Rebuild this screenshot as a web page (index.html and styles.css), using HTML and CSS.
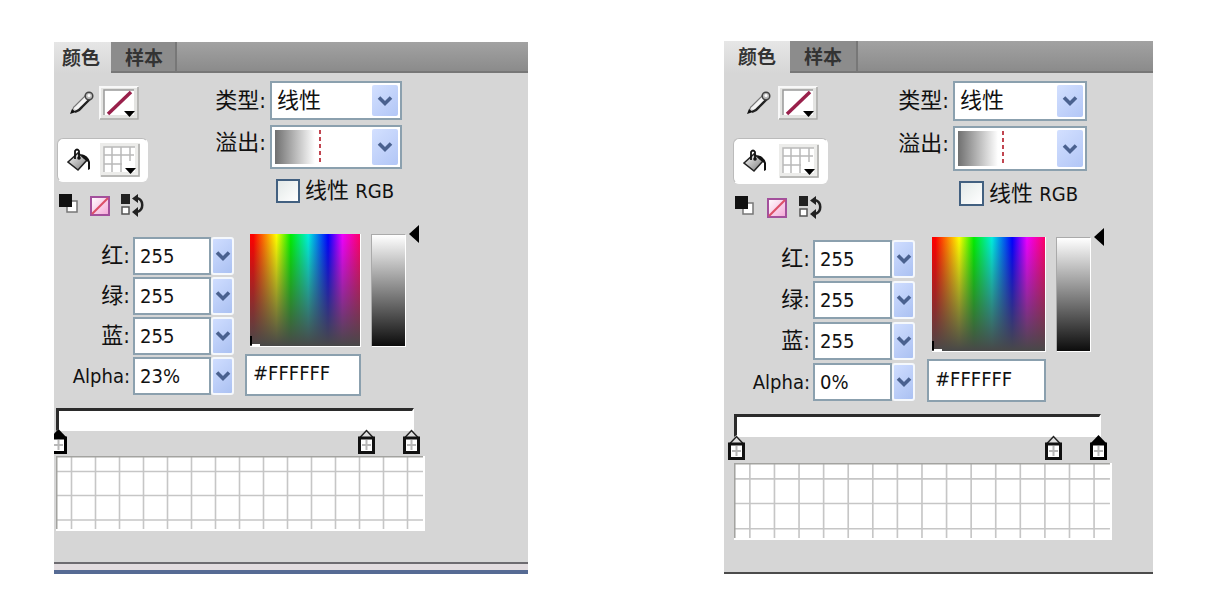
FILE: index.html
```html
<!DOCTYPE html>
<html lang="zh-CN">
<head>
<meta charset="utf-8">
<title>颜色</title>
<link rel="stylesheet" href="styles.css">
</head>
<body>
<svg class="defs" aria-hidden="true">
  <defs>
    <linearGradient id="steel" x1="0" y1="0" x2="1" y2="1"><stop offset="0" stop-color="#fff"/><stop offset="1" stop-color="#777"/></linearGradient>
    <linearGradient id="pink" x1="0" y1="0" x2="1" y2="1"><stop offset="0" stop-color="#fff"/><stop offset="1" stop-color="#f3a6d6"/></linearGradient>
  </defs>
  <symbol id="pencil" viewBox="0 0 24 24">
    <path d="M3 17 14 5 19 9 8 20Z" fill="#f4f4f4"/>
    <path d="M2 21Q3 16 5 15L16 4" fill="none" stroke="#777" stroke-width="1.200"/>
    <path d="M5 21Q10 19 12 16L20 8" fill="none" stroke="#222" stroke-width="2.400"/>
    <path d="M0 23 2 18 6 21Z" fill="#111"/>
    <circle cx="19" cy="5" r="3.800" fill="#bbb" stroke="#444" stroke-width="1.500"/>
    <circle cx="19" cy="4.500" r="1.500" fill="#fff"/>
  </symbol>
  <symbol id="bucket" viewBox="0 0 24 24">
    <path d="M1 14 11 5 20 12 11 22Z" fill="url(#steel)" stroke="#222" stroke-width="1.600"/>
    <path d="M8 11V3q2-3 4 0v7" fill="none" stroke="#111" stroke-width="1.800"/>
    <circle cx="12" cy="10" r="1.800" fill="#111"/>
    <path d="M14 6q7 1 9 8v7l-2 1v-8l-5-4Z" fill="#111"/>
  </symbol>
  <symbol id="nostroke" viewBox="0 0 40 34">
    <path d="M0 0H40V34H0Z" fill="#e4e4e2"/>
    <path d="M1 33V1H39" fill="none" stroke="#f8f8f8" stroke-width="2"/>
    <path d="M1 33H39V1" fill="none" stroke="#a8a8a6" stroke-width="1.500"/>
    <path d="M5 4H35V29H5Z" fill="#fff"/><path d="M5 29V4H35" fill="none" stroke="#999" stroke-width="1.500"/>
    <path d="M9 28 32 6" stroke="#99204b" stroke-width="3.500"/>
    <path d="M25 25H36L30.500 31Z" fill="#000"/>
  </symbol>
  <symbol id="gridfill" viewBox="0 0 40 34">
    <path d="M0 0H40V34H0Z" fill="#ececea"/>
    <path d="M1 33H39V1" fill="none" stroke="#a8a8a6" stroke-width="1.500"/>
    <path d="M4 4H35V29H4Z" fill="#fff"/><path d="M4 29V4H35M12 4V29M21 4V29M30 4V18M4 12H34M4 21H22" fill="none" stroke="#b9b9b9" stroke-width="1.500"/>
    <path d="M25 25H36L30.500 31Z" fill="#000"/>
  </symbol>
  <symbol id="bw" viewBox="0 0 20 24">
    <path d="M8 7H18V18H8Z" fill="#fff" stroke="#777" stroke-width="1.500"/>
    <path d="M0 0H13V13H0Z" fill="#111"/>
  </symbol>
  <symbol id="none" viewBox="0 0 22 24">
    <path d="M2 3H20V21H2Z" fill="url(#pink)" stroke="#a3509c" stroke-width="2"/>
    <path d="M3 20 19 4" stroke="#dc5068" stroke-width="2.200"/>
  </symbol>
  <symbol id="swap" viewBox="0 0 24 24">
    <path d="M0 0H9V10H0Z" fill="#222"/><path d="M1 13H8V20H1Z" fill="#fff" stroke="#555" stroke-width="1.500"/>
    <path d="M16 4C23 6 23 16 16 18" fill="none" stroke="#222" stroke-width="2.500"/>
    <path d="M11 4.500 17 0V9ZM11 18 17 13V23Z" fill="#222"/>
  </symbol>
  <symbol id="chev" viewBox="0 0 16 12"><path d="M2 2.500 8 8.500 14 2.500" fill="none" stroke="#4a618f" stroke-width="3.600"/></symbol>
  <symbol id="stop" viewBox="0 0 17 25">
    <path d="M1.500 9 8.500 1.500 15.500 9Z" fill="#ddd" stroke="#222" stroke-width="1.500"/>
    <path d="M1.500 9H15.500V23.500H1.500Z" fill="#fff" stroke="#111" stroke-width="3"/>
    <path d="M8.500 11V21M4 16H13" stroke="#b8b8b8" stroke-width="2"/>
  </symbol>
  <symbol id="stop-on" viewBox="0 0 17 25">
    <path d="M0 9 8.500 0 17 9Z" fill="#000"/>
    <path d="M1.500 9H15.500V23.500H1.500Z" fill="#fff" stroke="#000" stroke-width="3"/>
    <path d="M8.500 11V21M4 16H13" stroke="#b8b8b8" stroke-width="2"/>
  </symbol>
  <symbol id="lattice" viewBox="0 0 369 75" preserveAspectRatio="none">
    <path d="M0 0H369V75H0Z" fill="#fff"/>
    <path d="M15.500 0V73M39.500 0V73M63.500 0V73M87.500 0V73M111.500 0V73M135.500 0V73M159.500 0V73M183.500 0V73M207.500 0V73M231.500 0V73M255.500 0V73M279.500 0V73M303.500 0V73M327.500 0V73M351.500 0V73M0 15.500H367M0 39.500H367M0 64H367" fill="none" stroke="#c6c6c6" stroke-width="1.600"/>
    <path d="M.75 73V.75H367" fill="none" stroke="#a3a3a0" stroke-width="1.500"/>
  </symbol>
</svg>

<section class="panel panel-a">
  <div class="tabs" role="tablist">
    <button class="tab active" role="tab" aria-selected="true">颜色</button>
    <button class="tab" role="tab" aria-selected="false">样本</button>
  </div>
  <div class="top">
    <div class="tools">
      <div class="stroke-row">
        <svg class="tool"><use href="#pencil"/></svg>
        <button class="swatch" aria-label="笔触颜色"><svg><use href="#nostroke"/></svg></button>
      </div>
      <div class="fill-row">
        <svg class="tool"><use href="#bucket"/></svg>
        <button class="swatch" aria-label="填充颜色"><svg><use href="#gridfill"/></svg></button>
      </div>
      <div class="mini-row">
        <button class="mini mini-bw" aria-label="黑白"><svg><use href="#bw"/></svg></button>
        <button class="mini mini-none" aria-label="无颜色"><svg><use href="#none"/></svg></button>
        <button class="mini mini-swap" aria-label="交换颜色"><svg><use href="#swap"/></svg></button>
      </div>
    </div>
    <div class="settings">
      <label class="cap" for="a-type">类型:</label>
      <div class="combo">
        <select id="a-type"><option>线性</option></select>
        <span class="arrow"><svg><use href="#chev"/></svg></span>
      </div>
      <label class="cap cap-top" for="a-flow">溢出:</label>
      <div class="combo combo-tall">
        <select id="a-flow"><option></option></select>
        <span class="preview"></span>
        <span class="arrow"><svg><use href="#chev"/></svg></span>
      </div>
      <div class="check">
        <input type="checkbox" id="a-rgb"><label for="a-rgb">线性 <span class="latin">RGB</span></label>
      </div>
    </div>
  </div>
  <div class="middle">
    <div class="fields">
      <label for="a-r">红:</label><input id="a-r" value="255"><button class="step" aria-label="红"><svg><use href="#chev"/></svg></button>
      <label for="a-g">绿:</label><input id="a-g" value="255"><button class="step" aria-label="绿"><svg><use href="#chev"/></svg></button>
      <label for="a-b">蓝:</label><input id="a-b" value="255"><button class="step" aria-label="蓝"><svg><use href="#chev"/></svg></button>
      <label for="a-a" class="latin">Alpha:</label><input id="a-a" value="23%"><button class="step" aria-label="Alpha"><svg><use href="#chev"/></svg></button>
    </div>
    <div class="picker">
      <div class="maps">
        <div class="spectrum"></div>
        <div class="luma"></div>
        <svg class="pointer" viewBox="0 0 10 18"><path d="M0 9 10 0V18Z"/></svg>
      </div>
      <input class="hex" aria-label="十六进制" value="#FFFFFF">
    </div>
  </div>
  <div class="gradient">
    <div class="ramp">
      <svg class="stop at-start"><use href="#stop-on"/></svg>
      <svg class="stop at-mid"><use href="#stop"/></svg>
      <svg class="stop at-end"><use href="#stop"/></svg>
    </div>
    <svg class="lattice"><use href="#lattice"/></svg>
  </div>
  <div class="foot"></div>
</section>

<section class="panel panel-b">
  <div class="tabs" role="tablist">
    <button class="tab active" role="tab" aria-selected="true">颜色</button>
    <button class="tab" role="tab" aria-selected="false">样本</button>
  </div>
  <div class="top">
    <div class="tools">
      <div class="stroke-row">
        <svg class="tool"><use href="#pencil"/></svg>
        <button class="swatch" aria-label="笔触颜色"><svg><use href="#nostroke"/></svg></button>
      </div>
      <div class="fill-row">
        <svg class="tool"><use href="#bucket"/></svg>
        <button class="swatch" aria-label="填充颜色"><svg><use href="#gridfill"/></svg></button>
      </div>
      <div class="mini-row">
        <button class="mini mini-bw" aria-label="黑白"><svg><use href="#bw"/></svg></button>
        <button class="mini mini-none" aria-label="无颜色"><svg><use href="#none"/></svg></button>
        <button class="mini mini-swap" aria-label="交换颜色"><svg><use href="#swap"/></svg></button>
      </div>
    </div>
    <div class="settings">
      <label class="cap" for="b-type">类型:</label>
      <div class="combo">
        <select id="b-type"><option>线性</option></select>
        <span class="arrow"><svg><use href="#chev"/></svg></span>
      </div>
      <label class="cap cap-top" for="b-flow">溢出:</label>
      <div class="combo combo-tall">
        <select id="b-flow"><option></option></select>
        <span class="preview"></span>
        <span class="arrow"><svg><use href="#chev"/></svg></span>
      </div>
      <div class="check">
        <input type="checkbox" id="b-rgb"><label for="b-rgb">线性 <span class="latin">RGB</span></label>
      </div>
    </div>
  </div>
  <div class="middle">
    <div class="fields">
      <label for="b-r">红:</label><input id="b-r" value="255"><button class="step" aria-label="红"><svg><use href="#chev"/></svg></button>
      <label for="b-g">绿:</label><input id="b-g" value="255"><button class="step" aria-label="绿"><svg><use href="#chev"/></svg></button>
      <label for="b-b">蓝:</label><input id="b-b" value="255"><button class="step" aria-label="蓝"><svg><use href="#chev"/></svg></button>
      <label for="b-a" class="latin">Alpha:</label><input id="b-a" value="0%"><button class="step" aria-label="Alpha"><svg><use href="#chev"/></svg></button>
    </div>
    <div class="picker">
      <div class="maps">
        <div class="spectrum"></div>
        <div class="luma"></div>
        <svg class="pointer" viewBox="0 0 10 18"><path d="M0 9 10 0V18Z"/></svg>
      </div>
      <input class="hex" aria-label="十六进制" value="#FFFFFF">
    </div>
  </div>
  <div class="gradient">
    <div class="ramp">
      <svg class="stop at-start"><use href="#stop"/></svg>
      <svg class="stop at-mid"><use href="#stop"/></svg>
      <svg class="stop at-end"><use href="#stop-on"/></svg>
    </div>
    <svg class="lattice"><use href="#lattice"/></svg>
  </div>
  <div class="foot"></div>
</section>
</body>
</html>
```
FILE: styles.css
```css
* { box-sizing: border-box; }

body {
  margin: 0;
  padding: 41px 64px 0 54px;
  display: flex;
  align-items: flex-end;
  gap: 196px;
  background: #fff;
  color: #111;
  font-family: "DejaVu Sans Condensed", "Noto Sans", "Noto Sans CJK SC", sans-serif;
  font-size: 20px;
}

button, input, select { font: inherit; color: inherit; margin: 0; }
button { padding: 0; border: 0; background: none; }
svg { display: block; }
.defs { position: absolute; width: 0; height: 0; }

.panel {
  display: flex;
  flex-direction: column;
  min-width: 0;
  overflow: hidden;
  background: #d6d6d6;
}

.panel-a {
  flex: 474 1 0;
  --tabs-h: 31px;
  --tab-pad: 8px;
  --tab1: 57px;
  --tab2: 66px;
  --left: 3px;
  --tool-pad: 13px;
  --tool-gap: 5px;
  --box-gap: 9px;
  --box-w: 91px;
  --box-h: 44px;
  --mini-gap: 10px;
  --settings-x: 156px;
  --control: 132px;
  --combo-h: 39px;
  --combo-tall: 44px;
  --check: 24px;
  --top-h: 161px;
  --field-end: 76px;
  --field-w: 81px;
  --field-gap: 2px;
  --picker-gap: 11px;
  --map-w: 111px;
  --map-h: 113px;
  --hex-w: 116px;
  --hex-h: 42px;
  --ramp-left: 2px;
  --right: 103px;
  --lattice-h: 75px;
  --stop-gap: 25px;
  --pad-bottom: 31px;
}

.panel-b {
  flex: 429 1 0;
  --tabs-h: 32px;
  --tab-pad: 14px;
  --tab1: 66px;
  --tab2: 68px;
  --left: 9px;
  --tool-pad: 14px;
  --tool-gap: 7px;
  --box-gap: 12px;
  --box-w: 95px;
  --box-h: 46px;
  --mini-gap: 11px;
  --settings-x: 169px;
  --control: 134px;
  --combo-h: 40px;
  --combo-tall: 45px;
  --check: 25px;
  --top-h: 164px;
  --field-end: 86px;
  --field-w: 82px;
  --field-gap: 3px;
  --picker-gap: 12px;
  --map-w: 114px;
  --map-h: 115px;
  --hex-w: 119px;
  --hex-h: 43px;
  --ramp-left: 10px;
  --right: 41px;
  --lattice-h: 77px;
  --stop-gap: 26px;
  --pad-bottom: 32px;
}

/* tabs */
.tabs {
  display: flex;
  height: var(--tabs-h);
  background: linear-gradient(#a2a2a2, #8b8b8b);
  border-bottom: 2px solid #777;
}
.tab {
  width: var(--tab2);
  padding: 2px 0 0 14px;
  background: #8c8c8c;
  border-right: 2px solid #777;
  color: #333;
  font-size: 19px;
  font-weight: 700;
  line-height: 22px;
  text-align: left;
}
.tab.active {
  width: var(--tab1);
  height: var(--tabs-h);
  padding: 0 0 0 var(--tab-pad);
  border: 0;
  background: linear-gradient(#e6e6e6, #d6d6d6);
}

/* tools and type settings */
.top { display: flex; height: var(--top-h); }
.tools { width: var(--settings-x); padding: 13px 0 0 var(--left); }
.tool { width: 24px; height: 24px; }
.swatch svg { width: 40px; height: 34px; }
.stroke-row { display: flex; align-items: center; gap: var(--tool-gap); padding-left: var(--tool-pad); }
.fill-row {
  display: flex;
  align-items: center;
  gap: var(--box-gap);
  width: var(--box-w);
  height: var(--box-h);
  margin-top: 18px;
  padding-left: 9px;
  border: 1px solid #fff;
  border-top-color: #bbb;
  border-left-color: #bbb;
  border-radius: 6px;
  background: #fff;
}
.mini-row { display: flex; gap: var(--mini-gap); margin-top: 12px; padding-left: 2px; }
.mini svg { height: 24px; }
.mini-bw svg { width: 20px; }
.mini-none svg { width: 22px; }
.mini-swap svg { width: 24px; }

.settings {
  display: grid;
  grid-template-columns: 56px var(--control);
  grid-auto-rows: max-content;
  gap: 5px 4px;
  padding-top: 8px;
}
.cap { align-self: center; text-align: right; font-size: 22px; line-height: 36px; white-space: nowrap; }
.cap-top { align-self: start; }
.combo {
  display: grid;
  height: var(--combo-h);
  border: 2px solid #8ba0ae;
  background: #fff;
}
.combo-tall { height: var(--combo-tall); }
.combo > * { grid-area: 1 / 1; }
.combo select {
  appearance: none;
  width: 100%;
  border: 0;
  padding: 0 30px 0 5px;
  background: none;
  font-size: 22px;
  line-height: 32px;
}
.arrow {
  display: grid;
  place-items: center;
  justify-self: end;
  width: 26px;
  margin: 2px;
  border-radius: 2px;
  background: linear-gradient(135deg, #d3e0ff, #b2c6f6);
  pointer-events: none;
}
.arrow svg, .step svg { width: 16px; height: 12px; }
.preview {
  width: 46px;
  margin: 3px;
  background:
    repeating-linear-gradient(#c14550 0 4px, #fff 4px 7px) 100% 0 / 2px 100% no-repeat,
    linear-gradient(90deg, #707070, #fff 40px);
  pointer-events: none;
}
.check {
  grid-column: 2;
  display: flex;
  align-items: center;
  gap: 5px;
  margin: 5px 0 0 6px;
  height: var(--check);
  white-space: nowrap;
}
.check input {
  appearance: none;
  width: var(--check);
  height: var(--check);
  border: 2px solid #426080;
  background: linear-gradient(135deg, #e3e9e8, #fff);
}
.check label { font-size: 22px; line-height: 24px; }
.check .latin { font-size: 20px; }

/* channels and picker */
.middle { display: flex; gap: var(--picker-gap); }
.fields {
  display: grid;
  grid-template-columns: var(--field-end) var(--field-w) 23px;
  grid-auto-rows: 38px;
  gap: var(--field-gap) 0;
  padding-top: 3px;
}
.fields label { text-align: right; font-size: 22px; line-height: 38px; white-space: nowrap; }
.fields .latin { font-size: 20px; }
.fields input { margin-left: 3px; min-width: 0; padding: 0 5px; border: 2px solid #8ba0ae; background: #fff; }
.step {
  display: grid;
  place-items: center;
  border: 2px solid #f5f8fc;
  border-radius: 3px;
  background: linear-gradient(135deg, #cfddff, #abc1f2);
}
.picker { display: flex; flex-direction: column; gap: 7px; }
.maps { display: flex; padding-left: 5px; }
.spectrum {
  width: var(--map-w);
  height: var(--map-h);
  border-right: 1px solid #fff;
  border-bottom: 1px solid #fff;
  background:
    linear-gradient(#fff, #fff) 2px 100% / 8px 2px no-repeat,
    linear-gradient(#000, #000) 0 calc(100% - 1px) / 2px 9px no-repeat,
    linear-gradient(rgba(72, 72, 72, 0), rgba(72, 72, 72, 1)),
    linear-gradient(90deg, #f00 3%, #ff0 24%, #0e0 37%, #0ed 53%, #00f 71%, #e0f 84%, #f06);
}
.luma {
  width: 35px;
  height: var(--map-h);
  margin-left: 10px;
  border: 1px solid #fff;
  border-top-color: #aaa;
  border-left-color: #aaa;
  background: linear-gradient(#fff, #0c0c0c);
}
.pointer { width: 10px; height: 18px; margin: -9px 0 0 3px; }
.hex {
  width: var(--hex-w);
  height: var(--hex-h);
  padding: 0 6px 4px;
  border: 2px solid #8ba0ae;
  background: #fff;
}

/* gradient editor */
.gradient { margin: 12px var(--right) var(--pad-bottom) var(--ramp-left); }
.ramp {
  position: relative;
  height: 23px;
  margin: 0 11px var(--stop-gap) 0;
  border: 2px solid #fff;
  border-top: 3px solid #2b2b2b;
  border-left: 3px solid #2b2b2b;
  background: #fff;
}
.stop { position: absolute; top: 18px; width: 17px; height: 25px; }
.at-start { left: -9px; }
.at-mid { right: 37px; }
.at-end { right: -8px; }
.lattice { width: 100%; height: var(--lattice-h); }

.foot { margin-top: auto; }
.panel-a .foot { height: 12px; border-top: 2px solid #6d6b70; border-bottom: 4px solid #566b94; background: #e2dcdf; }
.panel-b .foot { height: 2px; background: #4b4b4b; }
```
